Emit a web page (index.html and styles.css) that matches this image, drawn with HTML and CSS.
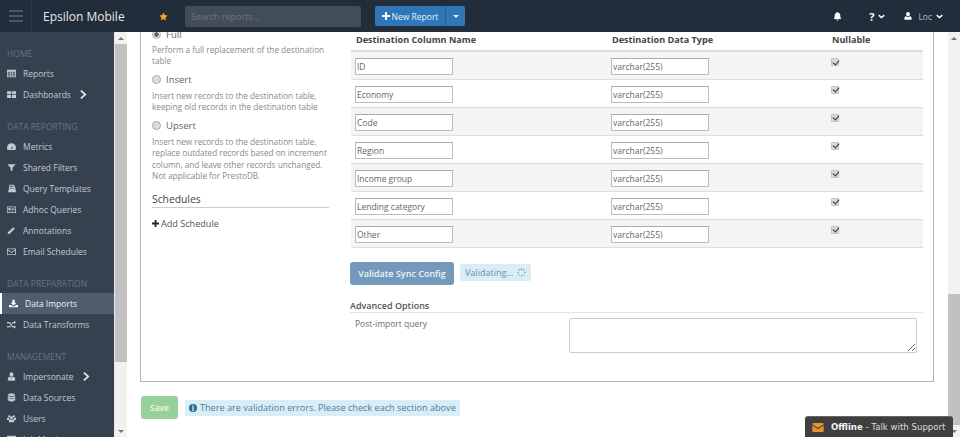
FILE: index.html
```html
<!DOCTYPE html>
<html lang="en">
<head>
<meta charset="utf-8">
<title>Epsilon Mobile</title>
<link rel="stylesheet" href="styles.css">
</head>
<body>
<header class="topbar">
  <div class="burger"><span></span><span></span><span></span></div>
  <div class="brand">Epsilon Mobile</div>
  <svg class="star" viewBox="0 0 24 24"><path d="M12 1l3.4 7.2 7.6 1-5.6 5.4 1.4 7.8L12 18.6l-6.8 3.8 1.4-7.8L1 9.200l7.600-1z"/></svg>
  <input class="search" placeholder="Search reports...">
  <div class="newreport">
    <button class="nr-main"><svg class="plus" viewBox="0 0 10 10"><path d="M3.700 0h2.600v3.700H10v2.600H6.300V10H3.700V6.300H0V3.700h3.700z"/></svg>New Report</button>
    <button class="nr-caret"><svg viewBox="0 0 8 4"><path d="M0 0h8L4 4z"/></svg></button>
  </div>
  <div class="topright">
    <svg class="bell" viewBox="0 0 16 16"><path d="M8 0a1.300 1.300 0 0 1 1.300 1.500C11.700 2 13 3.800 13 6.500c0 3 .6 4.500 2 6H1c1.400-1.500 2-3 2-6 0-2.700 1.300-4.500 3.700-5A1.300 1.300 0 0 1 8 0zM6 13.500h4a2 2 0 0 1-4 0z"/></svg>
    <span class="help">?<svg class="chev" viewBox="0 0 10 6"><path d="M1 1l4 3.500L9 1" /></svg></span>
    <span class="user"><svg class="person" viewBox="0 0 12 12"><path d="M6 0a2.800 2.800 0 0 1 2.800 3C8.800 5 7.800 6.400 6 6.400S3.200 5 3.200 3A2.800 2.800 0 0 1 6 0zM3 6.200c.8.800 1.800 1.200 3 1.200s2.200-.4 3-1.200c1.500.2 2.500 1.500 2.500 3.800 0 1.200-.6 1.800-1.500 1.800H2c-.9 0-1.500-.6-1.500-1.800 0-2.300 1-3.600 2.500-3.800z"/></svg><span class="loc">Loc</span><svg class="chev" viewBox="0 0 10 6"><path d="M1 1l4 3.500L9 1"/></svg></span>
  </div>
</header>

<svg class="defs" aria-hidden="true">
  <symbol id="i-table" viewBox="0 0 12 12"><path d="M0 1h12v10H0zM1 3.500v1.500h2.800V3.500zm3.800 0v1.500h2.400V3.500zm3.400 0v1.500H11V3.500zM1 6v1.500h2.800V6zm3.800 0v1.500h2.400V6zm3.400 0v1.500H11V6zM1 8.500V10h2.800V8.500zm3.800 0V10h2.400V8.500zm3.400 0V10H11V8.500z" fill-rule="evenodd"/></symbol>
  <symbol id="i-th" viewBox="0 0 12 12"><path d="M0 1.500h5.500v4H0zM6.500 1.500H12v4H6.500zM0 6.500h5.500v4H0zM6.500 6.500H12v4H6.500z"/></symbol>
  <symbol id="i-gauge" viewBox="0 0 12 12"><path d="M6 1.500a6 6 0 0 1 6 6c0 1.200-.3 2.200-.9 3H.9C.3 9.700 0 8.700 0 7.500a6 6 0 0 1 6-6zM5.200 8.200a1 1 0 0 0 1.600.8l1.700-4-2.700 3z" fill-rule="evenodd"/></symbol>
  <symbol id="i-filter" viewBox="0 0 12 12"><path d="M.5 1.500h11L7.300 6.300V11L4.700 9.500V6.300z"/></symbol>
  <symbol id="i-print" viewBox="0 0 12 12"><path d="M3 1h6l2 3.500L12 11H1l1-1.500zM3.800 2.300l-.4 1.400h5l-.5-1.400zM3 5.500v.9h6.500v-.9z" fill-rule="evenodd"/></symbol>
  <symbol id="i-card" viewBox="0 0 12 12"><path d="M0 2h12v8.500H0zM1 3v6.500h10V3zM1.800 4h3v2.500h-3zM6 4h4v.8H6zM6 5.700h4v.8H6zM1.800 7.500H10v.8H1.800z" fill-rule="evenodd"/></symbol>
  <symbol id="i-pencil" viewBox="0 0 12 12"><path d="M8.500 1.500l2 2-6.800 6.800-3 .7.700-3z"/></symbol>
  <symbol id="i-mail" viewBox="0 0 12 12"><path d="M0 2h12v8.500H0zM1 3.200l5 3.600 5-3.600V3H1zM1 4.500v5h10v-5L6 8z" fill-rule="evenodd"/></symbol>
  <symbol id="i-down" viewBox="0 0 12 12"><path d="M4.500 1h3v4h2.300L6 8.600 2.200 5h2.300zM0 8h3l1.500 1.600h3L9 8h3v3H0z"/></symbol>
  <symbol id="i-random" viewBox="0 0 12 12"><path d="M0 2.800h2.500c1.500 0 2.300 1 3.500 3.200 1 1.700 1.500 2.400 2.700 2.400H9.500V7L12 9.300 9.500 11.500V10H8.500C6.800 10 5.900 9 4.800 7 3.700 5 3.300 4.400 2.500 4.400H0zM0 8.400h2.500c.6 0 1-.4 1.500-1.100l1 1.400C4.300 9.500 3.500 10 2.500 10H0zM9.500 .8L12 3 9.500 5.300V4.400H8.700c-.7 0-1.100.4-1.600 1.100L6.200 4C7 3.200 7.700 2.800 8.700 2.800h.8z"/></symbol>
  <symbol id="i-user" viewBox="0 0 12 12"><path d="M6 .5a2.600 2.600 0 0 1 2.600 2.800c0 1.900-1 3.100-2.600 3.100S3.400 5.200 3.400 3.300A2.600 2.600 0 0 1 6 .5zM3.300 6.300C4 6.900 5 7.300 6 7.300s2-.4 2.700-1c1.300.3 2.300 1.500 2.300 3.700 0 1-.5 1.600-1.500 1.600h-7C1.500 11.600 1 11 1 10c0-2.200 1-3.400 2.300-3.700z"/></symbol>
  <symbol id="i-db" viewBox="0 0 12 12"><path d="M6 .5c3 0 5 .8 5 1.800S9 4 6 4 1 3.300 1 2.300 3 .5 6 .5zM1 3.500C2 4.500 4 5 6 5s4-.5 5-1.500v2C11 6.500 9 7.300 6 7.300S1 6.500 1 5.500zM1 6.800c1 1 3 1.500 5 1.500s4-.5 5-1.500v2c0 1-2 2.700-5 2.700S1 9.800 1 8.800z"/></symbol>
  <symbol id="i-users" viewBox="0 0 12 12"><path d="M2.800 1.500a1.500 1.500 0 1 1 0 3 1.500 1.500 0 0 1 0-3zM9.200 1.500a1.500 1.500 0 1 1 0 3 1.500 1.500 0 0 1 0-3zM6 2.500a2 2 0 1 1 0 4 2 2 0 0 1 0-4zM0 5h2.600c.3.700.7 1.200 1.200 1.500C3 7 2.500 7.500 2.400 8H0zM9.400 5H12v3H9.600c-.1-.5-.6-1-1.400-1.500.5-.3.900-.8 1.200-1.500zM3.500 7.200h5c.8.400 1.200 1.200 1.200 2.400 0 1-.5 1.400-1.200 1.400h-5c-.7 0-1.200-.4-1.200-1.400 0-1.200.4-2 1.200-2.400z"/></symbol>
  <symbol id="i-chev" viewBox="0 0 8 10"><path d="M1 .5l5 4.500-5 4.500" fill="none" stroke="currentColor" stroke-width="2"/></symbol>
</svg>

<div class="shell">
  <nav class="sidebar">
    <h6 class="nav-head">HOME</h6>
    <a class="nav-item"><svg class="ni"><use href="#i-table"/></svg>Reports</a>
    <a class="nav-item"><svg class="ni"><use href="#i-th"/></svg>Dashboards<svg class="nav-chev"><use href="#i-chev"/></svg></a>
    <h6 class="nav-head">DATA REPORTING</h6>
    <a class="nav-item"><svg class="ni"><use href="#i-gauge"/></svg>Metrics</a>
    <a class="nav-item"><svg class="ni"><use href="#i-filter"/></svg>Shared Filters</a>
    <a class="nav-item"><svg class="ni"><use href="#i-print"/></svg>Query Templates</a>
    <a class="nav-item"><svg class="ni"><use href="#i-card"/></svg>Adhoc Queries</a>
    <a class="nav-item"><svg class="ni"><use href="#i-pencil"/></svg>Annotations</a>
    <a class="nav-item"><svg class="ni"><use href="#i-mail"/></svg>Email Schedules</a>
    <h6 class="nav-head">DATA PREPARATION</h6>
    <a class="nav-item active"><svg class="ni"><use href="#i-down"/></svg>Data Imports</a>
    <a class="nav-item"><svg class="ni"><use href="#i-random"/></svg>Data Transforms</a>
    <h6 class="nav-head">MANAGEMENT</h6>
    <a class="nav-item"><svg class="ni"><use href="#i-user"/></svg>Impersonate<svg class="nav-chev"><use href="#i-chev"/></svg></a>
    <a class="nav-item"><svg class="ni"><use href="#i-db"/></svg>Data Sources</a>
    <a class="nav-item"><svg class="ni"><use href="#i-users"/></svg>Users</a>
    <a class="nav-item"><svg class="ni"><use href="#i-table"/></svg>Job Monitor</a>
  </nav>
  <div class="scroll scroll-side"><i class="arrow up"></i><b class="thumb"></b><i class="arrow down"></i></div>

  <main class="main">
    <section class="card">
      <div class="col-left">
        <label class="radio-row"><span class="radio on"></span>Full</label>
        <p class="help-text">Perform a full replacement of the destination table</p>
        <label class="radio-row"><span class="radio"></span>Insert</label>
        <p class="help-text">Insert new records to the destination table, keeping old records in the destination table</p>
        <label class="radio-row"><span class="radio"></span>Upsert</label>
        <p class="help-text">Insert new records to the destination table, replace outdated records based on increment column, and leave other records unchanged. Not applicable for PrestoDB.</p>
        <h4 class="sched-title">Schedules</h4>
        <div class="add-sched"><svg class="plus-dark" viewBox="0 0 10 10"><path d="M3.700 0h2.600v3.700H10v2.600H6.300V10H3.700V6.300H0V3.700h3.700z"/></svg>Add Schedule</div>
      </div>
      <div class="col-right">
        <table class="cols">
          <thead><tr><th>Destination Column Name</th><th>Destination Data Type</th><th>Nullable</th></tr></thead>
          <tbody>
            <tr><td><input class="field" value="ID"></td><td><input class="field" value="varchar(255)"></td><td><span class="check"></span></td></tr>
            <tr><td><input class="field" value="Economy"></td><td><input class="field" value="varchar(255)"></td><td><span class="check"></span></td></tr>
            <tr><td><input class="field" value="Code"></td><td><input class="field" value="varchar(255)"></td><td><span class="check"></span></td></tr>
            <tr><td><input class="field" value="Region"></td><td><input class="field" value="varchar(255)"></td><td><span class="check"></span></td></tr>
            <tr><td><input class="field" value="Income group"></td><td><input class="field" value="varchar(255)"></td><td><span class="check"></span></td></tr>
            <tr><td><input class="field" value="Lending category"></td><td><input class="field" value="varchar(255)"></td><td><span class="check"></span></td></tr>
            <tr><td><input class="field" value="Other"></td><td><input class="field" value="varchar(255)"></td><td><span class="check"></span></td></tr>
          </tbody>
        </table>
        <div class="validate-row">
          <button class="btn-validate">Validate Sync Config</button>
          <span class="validating">Validating...<svg class="spin" viewBox="0 0 12 12"><g fill="#4a6f8c"><circle cx="6" cy="1.500" r="1"/><circle cx="9.200" cy="2.800" r=".9"/><circle cx="10.500" cy="6" r=".8"/><circle cx="9.200" cy="9.200" r=".7"/><circle cx="6" cy="10.500" r=".7"/><circle cx="2.800" cy="9.200" r=".7"/><circle cx="1.500" cy="6" r=".8"/><circle cx="2.800" cy="2.800" r=".9"/></g></svg></span>
        </div>
        <h5 class="adv-title">Advanced Options</h5>
        <div class="adv-row">
          <label class="adv-label">Post-import query</label>
          <textarea class="adv-area"></textarea>
        </div>
      </div>
    </section>
    <div class="save-row">
      <button class="btn-save">Save</button>
      <span class="alert"><svg class="info" viewBox="0 0 12 12"><path d="M6 0a6 6 0 1 1 0 12A6 6 0 0 1 6 0zM5 2v2h2V2zM4.500 5v1H5v3h-.5v1h3V9H7V5z" fill-rule="evenodd"/></svg>There are validation errors. Please check each section above</span>
    </div>
  </main>
  <div class="scroll scroll-main"><i class="arrow up"></i><b class="thumb"></b><i class="arrow down"></i></div>
</div>

<div class="chat">
  <svg class="chat-mail" viewBox="0 0 14 11"><path d="M0 1.500A1.500 1.500 0 0 1 1.500 0h11A1.500 1.500 0 0 1 14 1.500L7 6 0 1.500zM0 3.200l7 4.500 7-4.500v6.300a1.500 1.500 0 0 1-1.500 1.500h-11A1.500 1.500 0 0 1 0 9.500z"/></svg>
  <span><b>Offline</b> - Talk with Support</span>
</div>
</body>
</html>
```

FILE: styles.css
```css
* { box-sizing: border-box; }
html, body { height: 100%; }
body {
  margin: 0;
  overflow: hidden;
  display: flex;
  flex-direction: column;
  font-family: "Open Sans", "Noto Sans", sans-serif;
  font-size: 9px;
  color: #555;
  background: #fff;
}
.defs { display: none; }

/* top bar */
.topbar {
  flex: 0 0 32px;
  height: 32px;
  background: #212d3a;
  display: flex;
  align-items: center;
  color: #fff;
  position: relative;
  z-index: 2;
}
.burger {
  width: 32px;
  height: 32px;
  border-right: 1px solid #2a3643;
  display: flex;
  flex-direction: column;
  justify-content: center;
  gap: 3px;
  padding-left: 9px;
}
.burger span { display: block; width: 14px; height: 2px; background: #4a5561; }
.brand { margin-left: 11px; width: 113px; font-size: 12px; color: #e6e8ea; }
.star { width: 9px; height: 9px; fill: #f5a623; margin-left: 3px; }
.search {
  margin-left: 17px;
  width: 176px;
  height: 21px;
  border: 0;
  border-radius: 2px;
  background: #434d58;
  padding: 0 6px;
  font: 9px "Open Sans", sans-serif;
  color: #eee;
}
.search::placeholder { color: #6b747e; opacity: 1; }
.newreport { margin-left: 14px; display: flex; height: 20px; }
.newreport button {
  border: 0;
  background: #2f77b8;
  color: #e8f0f7;
  font: 8.500px "Open Sans", sans-serif;
  padding: 0;
  height: 20px;
  display: flex;
  align-items: center;
  justify-content: center;
}
.nr-main { width: 70px; border-radius: 2px 0 0 2px; }
.nr-caret { width: 20px; border-left: 1px solid #1f5f99 !important; border-radius: 0 2px 2px 0; }
.nr-caret svg { width: 6px; height: 3px; fill: #e8f0f7; }
.plus { width: 8px; height: 8px; fill: #fff; margin-right: 2px; }
.topright { margin-left: auto; display: flex; align-items: center; padding-right: 17px; }
.bell { width: 9px; height: 9px; fill: #fff; margin-right: 27px; }
.help { display: flex; align-items: center; font-size: 11px; font-weight: 700; margin-right: 19px; }
.help .chev { margin-left: 4px; }
.user { display: flex; align-items: center; }
.person { width: 8px; height: 8px; fill: #fff; margin-right: 6px; }
.loc { font-size: 8.500px; color: #a9c0c4; margin-right: 4px; }
.chev { width: 7px; height: 5px; fill: none; stroke: #fff; stroke-width: 2; }

/* shell */
.shell { flex: 1 1 auto; min-height: 0; display: flex; }
.sidebar {
  flex: 0 0 115px;
  background: #36414f;
  overflow: hidden;
  padding-top: 16px;
  border-right: 1px solid #e8e8e8;
}
.nav-head {
  margin: 0;
  height: 12px;
  line-height: 12px;
  padding-left: 7px;
  font-size: 8.500px;
  font-weight: 400;
  color: #66727f;
  margin-bottom: 3px;
}
.nav-item {
  display: flex;
  align-items: center;
  height: 21px;
  padding-left: 7px;
  color: #c3c9d0;
  font-size: 8.500px;
  white-space: nowrap;
}
.nav-item + .nav-head { margin-top: 16px; }
.ni { width: 9px; height: 9px; fill: #c3c9d0; margin-right: 7px; flex: none; }
.nav-chev { width: 7px; height: 9px; color: #dfe3e7; margin-left: 9px; }
.nav-item.active {
  background: #4f5d6e;
  border-left: 2px solid #fff;
  padding-left: 7px;
  color: #eef1f4;
}
.nav-item.active .ni { fill: #fff; margin-right: 7px; }

.scroll {
  flex: 0 0 12px;
  background: #f1f1f1;
  display: flex;
  flex-direction: column;
  align-items: stretch;
  position: relative;
}
.arrow { flex: 0 0 12px; display: flex; justify-content: center; align-items: center; }
.arrow::after { content: ""; border-left: 3px solid transparent; border-right: 3px solid transparent; }
.up::after { border-bottom: 3px solid #777; }
.down::after { border-top: 3px solid #777; }
.thumb { display: block; background: #c1c1c1; }
.scroll-side .thumb { height: 318px; margin-bottom: auto; }
.scroll-main .thumb { height: 131px; margin-top: auto; }

/* main */
.main { flex: 1 1 auto; min-width: 0; overflow: hidden; background: #fff; position: relative; }
.card {
  margin: -12px 14px 0 13px;
  height: 362px;
  border: 1px solid #b4b4b4;
  border-top: 0;
  display: flex;
  padding: 7px 9px 0 11px;
}
.col-left { flex: 0 0 177px; margin-right: 22px; }
.radio-row {
  display: flex;
  align-items: center;
  height: 14px;
  font-size: 9.500px;
  color: #666;
}
.radio {
  width: 9px; height: 9px;
  border-radius: 50%;
  border: 1px solid #aaa;
  background: #ddd;
  margin-right: 5px;
  flex: none;
}
.radio.on { background: radial-gradient(circle, #666 0 2px, #e4e4e4 2.500px); }
.help-text {
  margin: 3px 0 6.400px;
  font-size: 8.200px;
  line-height: 11.300px;
  color: #8a8a8a;
}
.sched-title {
  margin: 9px 0 0;
  height: 18px;
  font-size: 10.300px;
  font-weight: 400;
  color: #444;
  border-bottom: 1px solid #ccc;
  line-height: 19px;
}
.add-sched { margin-top: 9px; display: flex; align-items: center; font-size: 9.100px; color: #555; }
.plus-dark { width: 7px; height: 7px; fill: #222; margin-right: 2px; }

.col-right { flex: 1 1 auto; min-width: 0; margin-top: -1px; }
.cols { width: 572px; border-collapse: collapse; table-layout: fixed; }
.cols th {
  height: 25px;
  text-align: left;
  font-size: 9.100px;
  font-weight: 700;
  color: #444;
  padding: 2px 0 0 5px;
  border-bottom: 2px solid #ddd;
}
.cols th:nth-child(1), .cols td:nth-child(1) { width: 256px; }
.cols th:nth-child(2), .cols td:nth-child(2) { width: 220px; }
.cols td {
  height: 28px;
  padding: 6px 0 0 4px;
  vertical-align: top;
  border-bottom: 1px solid #ddd;
}
.cols tbody tr:nth-child(odd) { background: #f4f4f4; }
.field {
  display: block;
  width: 98px;
  height: 17px;
  border: 1px solid #bbb;
  border-top-color: #aaa;
  border-radius: 1px;
  background: #fff;
  padding: 0 2px 0 1px;
  font: 8.500px "Open Sans", sans-serif;
  color: #666;
}
.check {
  display: block;
  width: 8px; height: 8px;
  border-radius: 1px;
  background: #d9d9d9;
  border: 1px solid #c4c4c4;
  position: relative;
}
.check::after {
  content: "";
  position: absolute;
  left: 1.500px; top: -.5px;
  width: 3px; height: 5px;
  border: solid #333;
  border-width: 0 1.500px 1.500px 0;
  transform: rotate(40deg);
}

.validate-row { display: flex; align-items: flex-start; margin: 14px 0 0 -1px; }
.btn-validate {
  width: 104px;
  height: 23px;
  border: 0;
  border-radius: 3px;
  background: #7399bb;
  color: #f0f4f8;
  font: 600 9px "Open Sans", sans-serif;
  padding: 0;
}
.validating {
  margin: 2px 0 0 6px;
  width: 71px;
  height: 17px;
  background: #d9edf7;
  border-radius: 2px;
  color: #6f8ea3;
  font-size: 9px;
  display: flex;
  align-items: center;
  padding-left: 5px;
}
.spin { width: 9px; height: 9px; margin-left: 4px; }
.adv-title {
  margin: 14px 0 0 -1px;
  height: 14px;
  line-height: 13px;
  font-size: 9px;
  font-weight: 600;
  color: #555;
  border-bottom: 1px solid #e4e4e4;
  width: 573px;
}
.adv-row { display: flex; margin-top: 5px; padding-left: 4px; }
.adv-label { width: 214px; font-size: 8.500px; color: #6b6b6b; line-height: 11px; }
.adv-area {
  width: 348px;
  height: 35px;
  border: 1px solid #ccc;
  border-radius: 2px;
  background: #fff;
  display: block;
}

.save-row { display: flex; align-items: center; margin: 14px 0 0 14px; }
.btn-save {
  width: 37px;
  height: 23px;
  border: 0;
  border-radius: 3px;
  background: #97d19a;
  color: #eef8ee;
  font: 600 8.500px "Open Sans", sans-serif;
  padding: 0;
}
.alert {
  margin-left: 7px;
  width: 275px;
  height: 16px;
  background: #d9edf7;
  color: #4d7d98;
  font-size: 9.150px;
  display: flex;
  align-items: center;
  padding-left: 4px;
  white-space: nowrap;
}
.info { width: 8px; height: 8px; fill: #2a6a90; margin-right: 3px; flex: none; }

/* chat widget */
.chat {
  position: absolute;
  left: 805px;
  bottom: 0;
  width: 148px;
  height: 21px;
  background: #3f3f3f;
  border-top: 1px solid #666;
  border-radius: 3px 3px 0 0;
  color: #dcdcdc;
  font-family: "DejaVu Sans", sans-serif;
  font-size: 8.600px;
  display: flex;
  align-items: center;
  padding-left: 7px;
  white-space: nowrap;
}
.chat b { color: #f2f2f2; font-weight: 700; }
.chat-mail { width: 12px; height: 9px; fill: #e8932f; margin-right: 7px; }
```
